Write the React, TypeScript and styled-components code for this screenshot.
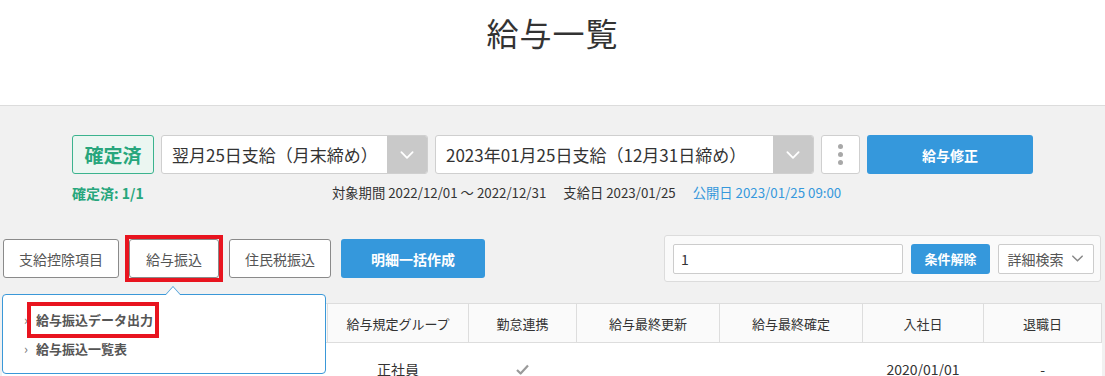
import React from 'react';
import styled, { createGlobalStyle } from 'styled-components';

const GlobalStyle = createGlobalStyle`
  html, body {
    margin: 0;
    padding: 0;
    background: #f1f1f1;
    overflow: hidden;
  }
  body {
    font-family: "Noto Sans CJK JP", "Noto Sans", sans-serif;
    color: #333;
  }
  * { box-sizing: border-box; }
`;

const BLUE = '#3598dc';
const GREEN = '#27a67c';

const Header = styled.header`
  height: 106px;
  background: #fff;
  border-bottom: 1px solid #dcdcdc;
  display: flex;
  justify-content: center;
  padding-top: 9px;
`;

const Title = styled.h1`
  margin: 0;
  font-size: 32px;
  line-height: 46px;
  font-weight: 400;
  letter-spacing: 1px;
  color: #333;
`;

const Main = styled.main`
  padding: 0 4px 0 2px;
`;

const ControlRow = styled.div`
  display: flex;
  align-items: center;
  gap: 7px;
  margin-top: 29px;
  padding-left: 70px;
`;

const Badge = styled.div`
  width: 82px;
  height: 39px;
  border: 1px solid #3bb38e;
  background: #ebf6f1;
  border-radius: 3px;
  color: ${GREEN};
  font-size: 19px;
  font-weight: 700;
  display: flex;
  align-items: center;
  justify-content: center;
`;

const Select = styled.div<{ width: number }>`
  width: ${(p) => p.width}px;
  height: 39px;
  border: 1px solid #cfcfcf;
  border-radius: 3px;
  background: #fff;
  display: flex;
  overflow: hidden;
`;

const SelectText = styled.div`
  flex: 1;
  display: flex;
  align-items: center;
  padding-left: 10px;
  font-size: 17px;
  color: #333;
  white-space: nowrap;
`;

const SelectArrow = styled.div`
  width: 40px;
  background: #c9c9c9;
  display: flex;
  align-items: center;
  justify-content: center;
`;

const KebabButton = styled.div`
  width: 39px;
  height: 39px;
  background: #fff;
  border: 1px solid #cfcfcf;
  border-radius: 3px;
  display: flex;
  flex-direction: column;
  align-items: center;
  justify-content: center;
  gap: 3px;
  span {
    width: 5px;
    height: 5px;
    border-radius: 50%;
    background: #a8a8a8;
  }
`;

const PrimaryButton = styled.button<{ width: number; height?: number; size?: number }>`
  width: ${(p) => p.width}px;
  height: ${(p) => p.height || 39}px;
  background: ${BLUE};
  border: none;
  border-radius: 3px;
  color: #fff;
  font-family: inherit;
  font-size: ${(p) => p.size || 14}px;
  font-weight: 700;
  padding: 0;
  cursor: pointer;
`;

const InfoRow = styled.div`
  display: flex;
  align-items: center;
  height: 18px;
  margin-top: 10px;
  padding-left: 70px;
  font-size: 13.3px;
  line-height: 18px;
  white-space: nowrap;
`;

const DoneCount = styled.span`
  width: 260px;
  color: ${GREEN};
  font-weight: 700;
  font-size: 14px;
`;

const InfoItem = styled.span<{ blue?: boolean }>`
  margin-right: 17px;
  color: ${(p) => (p.blue ? BLUE : '#333')};
`;

const ActionBar = styled.div`
  display: flex;
  align-items: center;
  justify-content: space-between;
  margin-top: 33px;
`;

const ButtonGroup = styled.div`
  position: relative;
  display: flex;
  align-items: center;
  gap: 10px;
  padding-left: 1px;
`;

const OutlineButton = styled.button<{ width: number }>`
  width: ${(p) => p.width}px;
  height: 39px;
  background: #fff;
  border: 1px solid #8a8a8a;
  border-radius: 3px;
  color: #555;
  font-family: inherit;
  font-size: 14px;
  padding: 0;
  cursor: pointer;
`;

const Highlight = styled.span<{ inset?: number }>`
  display: inline-flex;
  border: 4px solid #e8141f;
  margin: -${(p) => p.inset ?? 4}px;
`;

const Popup = styled.div`
  position: absolute;
  left: 0;
  top: 55px;
  width: 324px;
  height: 80px;
  background: #fff;
  border: 1px solid #3a98d8;
  border-radius: 4px;
  z-index: 10;
  padding: 10px 0 0 21px;
  &::before,
  &::after {
    content: '';
    position: absolute;
    left: 162px;
    width: 0;
    height: 0;
    border-left: 8px solid transparent;
    border-right: 8px solid transparent;
  }
  &::before {
    top: -9px;
    border-bottom: 9px solid #3a98d8;
  }
  &::after {
    top: -8px;
    border-bottom: 9px solid #fff;
  }
`;

const PopupItem = styled.div`
  display: flex;
  align-items: center;
  height: 29px;
  font-size: 13px;
  font-weight: 700;
  color: #555;
  white-space: nowrap;
`;

const Chevron = styled.span`
  width: 12px;
  font-size: 13px;
  font-weight: 400;
  color: #777;
`;

const ItemLabel = styled.span`
  line-height: 18px;
  padding: 5px 2px 5px 5px;
`;

const SearchPanel = styled.div`
  width: 437px;
  height: 47px;
  background: #fafafa;
  border: 1px solid #dcdcdc;
  border-radius: 3px;
  display: flex;
  align-items: center;
  gap: 8px;
  padding-left: 8px;
`;

const SearchInput = styled.div`
  width: 230px;
  height: 30px;
  background: #fff;
  border: 1px solid #cccccc;
  border-radius: 2px;
  display: flex;
  align-items: center;
  padding-left: 7px;
  font-size: 14px;
  color: #333;
`;

const DetailButton = styled.button`
  width: 96px;
  height: 30px;
  background: #fff;
  border: 1px solid #cccccc;
  border-radius: 2px;
  color: #555;
  font-family: inherit;
  font-size: 14px;
  display: flex;
  align-items: center;
  justify-content: center;
  gap: 6px;
  padding: 0;
`;

const Table = styled.table`
  margin-top: 21px;
  width: 1099px;
  border-collapse: collapse;
  table-layout: fixed;
  background: #fff;
`;

const Th = styled.th`
  height: 39px;
  background: #fafafa;
  border: 1px solid #dddddd;
  font-size: 13px;
  font-weight: 400;
  color: #333;
  text-align: center;
`;

const Td = styled.td<{ align?: string }>`
  height: 56px;
  padding: 16px 0 0;
  border-left: 1px solid transparent;
  font-size: 14px;
  line-height: 20px;
  color: #333;
  text-align: ${(p) => p.align || 'center'};
  vertical-align: top;
`;

const Link = styled.span`
  display: inline-block;
  margin-top: 14px;
  padding-left: 20px;
  color: ${BLUE};
  font-size: 14px;
`;

const ChevronDown: React.FC<{ color: string; size?: number }> = ({ color, size = 16 }) => (
  <svg width={size} height={size} viewBox="0 0 16 16" fill="none">
    <path d="M3 5.5 L8 10.5 L13 5.5" stroke={color} strokeWidth="1.6" strokeLinecap="round" strokeLinejoin="round" />
  </svg>
);

const CheckMark = () => (
  <svg width="13" height="11" viewBox="0 0 13 11" style={{ marginTop: 5 }}>
    <path d="M1 6 L4.6 9.5 L12 1.5" stroke="#9a9a9a" strokeWidth="2.2" fill="none" strokeLinejoin="round" />
  </svg>
);

const columns = [
  { label: '', width: 40 },
  { label: '社員番号', width: 120 },
  { label: '氏名', width: 165 },
  { label: '給与規定グループ', width: 141 },
  { label: '勤怠連携', width: 108 },
  { label: '給与最終更新', width: 143 },
  { label: '給与最終確定', width: 143 },
  { label: '入社日', width: 121 },
  { label: '退職日', width: 118 },
];

export default function App() {
  return (
    <>
      <GlobalStyle />
      <Header>
        <Title>給与一覧</Title>
      </Header>
      <Main>
        <ControlRow>
          <Badge>確定済</Badge>
          <Select width={267}>
            <SelectText>翌月25日支給（月末締め）</SelectText>
            <SelectArrow>
              <ChevronDown color="#fff" size={18} />
            </SelectArrow>
          </Select>
          <Select width={379}>
            <SelectText>2023年01月25日支給（12月31日締め）</SelectText>
            <SelectArrow>
              <ChevronDown color="#fff" size={18} />
            </SelectArrow>
          </Select>
          <KebabButton>
            <span />
            <span />
            <span />
          </KebabButton>
          <PrimaryButton width={166}>給与修正</PrimaryButton>
        </ControlRow>
        <InfoRow>
          <DoneCount>確定済: 1/1</DoneCount>
          <InfoItem>対象期間 2022/12/01 〜 2022/12/31</InfoItem>
          <InfoItem>支給日 2023/01/25</InfoItem>
          <InfoItem blue>公開日 2023/01/25 09:00</InfoItem>
        </InfoRow>
        <ActionBar>
          <ButtonGroup>
            <OutlineButton width={116}>支給控除項目</OutlineButton>
            <Highlight>
              <OutlineButton width={90}>給与振込</OutlineButton>
            </Highlight>
            <OutlineButton width={102}>住民税振込</OutlineButton>
            <PrimaryButton width={144}>明細一括作成</PrimaryButton>
            <Popup>
              <PopupItem>
                <Chevron>›</Chevron>
                <Highlight inset={9}>
                  <ItemLabel>給与振込データ出力</ItemLabel>
                </Highlight>
              </PopupItem>
              <PopupItem>
                <Chevron>›</Chevron>
                <span>給与振込一覧表</span>
              </PopupItem>
            </Popup>
          </ButtonGroup>
          <SearchPanel>
            <SearchInput>1</SearchInput>
            <PrimaryButton width={79} height={30} size={13}>
              条件解除
            </PrimaryButton>
            <DetailButton>
              詳細検索
              <ChevronDown color="#888" size={15} />
            </DetailButton>
          </SearchPanel>
        </ActionBar>
        <Table>
          <colgroup>
            {columns.map((c, i) => (
              <col key={i} style={{ width: c.width }} />
            ))}
          </colgroup>
          <thead>
            <tr>
              {columns.map((c, i) => (
                <Th key={i}>{c.label}</Th>
              ))}
            </tr>
          </thead>
          <tbody>
            <tr>
              <Td align="left">
                <Link>001</Link>
              </Td>
              <Td />
              <Td />
              <Td>正社員</Td>
              <Td>
                <CheckMark />
              </Td>
              <Td />
              <Td />
              <Td>2020/01/01</Td>
              <Td>-</Td>
            </tr>
          </tbody>
        </Table>
      </Main>
    </>
  );
}
